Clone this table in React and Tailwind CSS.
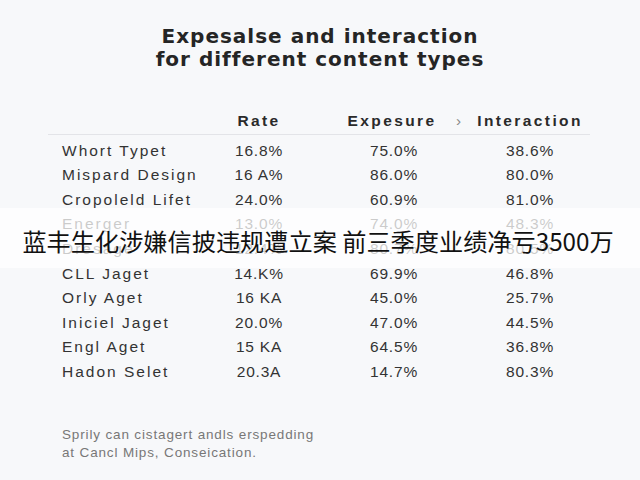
import React from "react";

const rows = [
  ["Whort Typet", "16.8%", "75.0%", "38.6%"],
  ["Mispard Design", "16 A%", "86.0%", "80.0%"],
  ["Cropoleld Lifet", "24.0%", "60.9%", "81.0%"],
  ["Energer", "13.0%", "74.0%", "48.3%"],
  ["Dresage", "12.4%", "80.7%", "80.5%"],
  ["CLL Jaget", "14.K%", "69.9%", "46.8%"],
  ["Orly Aget", "16 KA", "45.0%", "25.7%"],
  ["Iniciel Jaget", "20.0%", "47.0%", "44.5%"],
  ["Engl Aget", "15 KA", "64.5%", "36.8%"],
  ["Hadon Selet", "20.3A", "14.7%", "80.3%"],
];

const cols = "grid grid-cols-[167px_88px_178px_98px]";

export default function App() {
  return (
    <div className="relative w-[640px] h-[480px] overflow-hidden bg-[#f7f8fa] font-['Liberation_Sans',sans-serif]">
      {/* title */}
      <div className="pt-[25px] text-center font-['DejaVu_Sans',sans-serif] font-bold text-[20px] leading-[23px] text-[#252525] tracking-[1px]">
        <div>Expesalse and interaction</div>
        <div>for different content types</div>
      </div>

      {/* table */}
      <div className="mt-[37px] ml-[48px] w-[542px]">
        <div className={`${cols} h-[27px] items-center text-[15.5px] font-bold text-[#2a2a2a] tracking-[2.4px] border-b border-[#e3e4e8]`}>
          <div />
          <div className="flex justify-center">Rate</div>
          <div className="relative flex justify-center">
            Expesure
            <span className="absolute left-[153px] top-0 text-[#888] font-normal tracking-normal">›</span>
          </div>
          <div className="flex justify-center whitespace-nowrap">Interaction</div>
        </div>
        <div className="pt-[3px]">
          {rows.map((r) => (
            <div key={r[0]} className={`${cols} h-[24.6px] items-center text-[15.5px] text-[#333] tracking-[0.8px]`}>
              <div className="pl-[14px] tracking-[2px] whitespace-nowrap">{r[0]}</div>
              <div className="flex justify-center">{r[1]}</div>
              <div className="flex justify-center pl-[4px]">{r[2]}</div>
              <div className="flex justify-center">{r[3]}</div>
            </div>
          ))}
        </div>
      </div>

      {/* footer note */}
      <div className="mt-[42px] ml-[62px] text-[13.5px] leading-[18px] text-[#777] tracking-[0.85px]">
        <div>Sprily can cistagert andls erspedding</div>
        <div>at Cancl Mips, Conseication.</div>
      </div>

      {/* caption band */}
      <div className="absolute left-0 right-0 top-[208px] h-[60px] bg-white/75 flex items-center justify-center pt-[7px] pr-[4px]">
        <span className="font-['Noto_Sans_CJK_SC',sans-serif] text-[24.2px] text-[#111] whitespace-nowrap">
          蓝丰生化涉嫌信披违规遭立案 前三季度业绩净亏3500万
        </span>
      </div>
    </div>
  );
}
